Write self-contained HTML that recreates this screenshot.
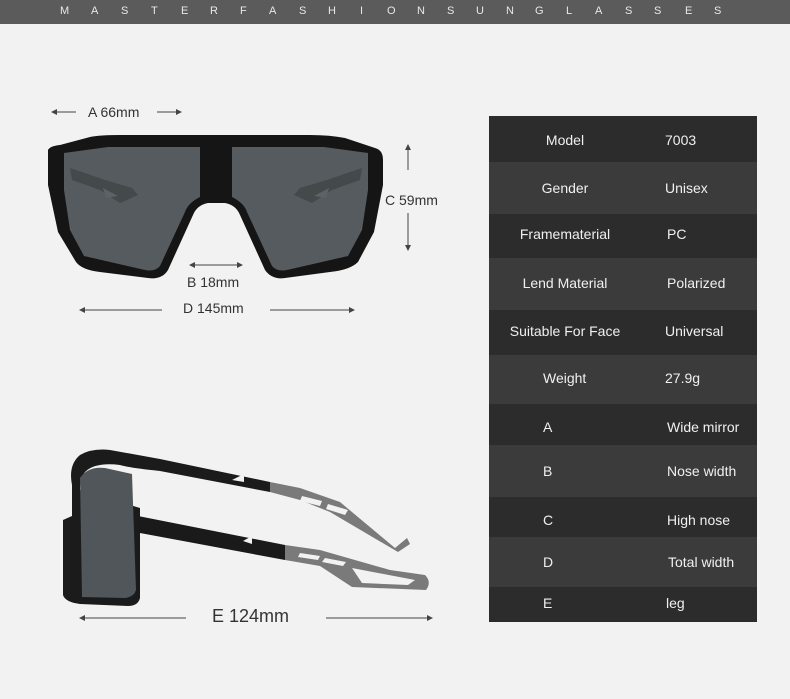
<!DOCTYPE html>
<html><head><meta charset="utf-8"><style>
body{margin:0;width:790px;height:699px;background:#f2f2f2;font-family:"Liberation Sans",sans-serif;position:relative;overflow:hidden}
.hdr{position:absolute;left:0;top:0;width:790px;height:24px;background:#5b5b5b}
.hdr span{position:absolute;top:5px;color:#e8e8e8;font-size:11px}
.tbl{position:absolute;left:489px;top:116px;width:268px;height:506px}
.r{position:absolute;left:0;width:268px;color:#f0f0f0;font-size:14px}
.r .a{position:absolute;left:0;width:152px;text-align:center}
.r .b{position:absolute;left:176px}
.lbl{position:absolute;color:#333;font-size:14px}
</style></head><body>
<div class="hdr">
<span style="left:60px">M</span><span style="left:91px">A</span><span style="left:121px">S</span><span style="left:151px">T</span><span style="left:181px">E</span><span style="left:210px">R</span><span style="left:240px">F</span><span style="left:269px">A</span><span style="left:299px">S</span><span style="left:328px">H</span><span style="left:360px">I</span><span style="left:387px">O</span><span style="left:417px">N</span><span style="left:447px">S</span><span style="left:476px">U</span><span style="left:506px">N</span><span style="left:535px">G</span><span style="left:566px">L</span><span style="left:595px">A</span><span style="left:625px">S</span><span style="left:654px">S</span><span style="left:685px">E</span><span style="left:714px">S</span>
</div>
<div class="tbl">
<div class="r" style="top:0;height:46px;background:#2c2c2c"><span class="a" style="top:16px">Model</span><span class="b" style="top:16px">7003</span></div>
<div class="r" style="top:46px;height:52px;background:#3b3b3b"><span class="a" style="top:18px">Gender</span><span class="b" style="top:18px">Unisex</span></div>
<div class="r" style="top:98px;height:44px;background:#2c2c2c"><span class="a" style="top:12px">Framematerial</span><span class="b" style="left:178px;top:12px">PC</span></div>
<div class="r" style="top:142px;height:52px;background:#3b3b3b"><span class="a" style="top:17px">Lend Material</span><span class="b" style="left:178px;top:17px">Polarized</span></div>
<div class="r" style="top:194px;height:45px;background:#2c2c2c"><span class="a" style="top:13px">Suitable For Face</span><span class="b" style="top:13px">Universal</span></div>
<div class="r" style="top:239px;height:49px;background:#3b3b3b"><span class="a" style="left:54px;width:auto;top:15px">Weight</span><span class="b" style="top:15px">27.9g</span></div>
<div class="r" style="top:288px;height:41px;background:#2c2c2c"><span class="a" style="left:54px;width:auto;top:15px">A</span><span class="b" style="left:178px;top:15px">Wide mirror</span></div>
<div class="r" style="top:329px;height:52px;background:#3b3b3b"><span class="a" style="left:54px;width:auto;top:18px">B</span><span class="b" style="left:178px;top:18px">Nose width</span></div>
<div class="r" style="top:381px;height:40px;background:#2c2c2c"><span class="a" style="left:54px;width:auto;top:15px">C</span><span class="b" style="left:178px;top:15px">High nose</span></div>
<div class="r" style="top:421px;height:50px;background:#3b3b3b"><span class="a" style="left:54px;width:auto;top:17px">D</span><span class="b" style="left:179px;top:17px">Total width</span></div>
<div class="r" style="top:471px;height:35px;background:#2c2c2c"><span class="a" style="left:54px;width:auto;top:8px">E</span><span class="b" style="left:177px;top:8px">leg</span></div>
</div>
<svg width="790" height="699" style="position:absolute;left:0;top:0">
<defs><marker id="ah" markerWidth="6" markerHeight="6" refX="5" refY="3" orient="auto"><path d="M0,0 L6,3 L0,6 z" fill="#444"/></marker></defs>
<g stroke="#444" stroke-width="1" marker-end="url(#ah)">
<line x1="76" y1="112" x2="52" y2="112"/><line x1="157" y1="112" x2="181" y2="112"/>
<line x1="408" y1="170" x2="408" y2="145"/><line x1="408" y1="213" x2="408" y2="250"/>
<line x1="215" y1="265" x2="190" y2="265"/><line x1="215" y1="265" x2="242" y2="265"/>
<line x1="162" y1="310" x2="80" y2="310"/><line x1="270" y1="310" x2="354" y2="310"/>
<line x1="186" y1="618" x2="80" y2="618"/><line x1="326" y1="618" x2="432" y2="618"/>
</g>
<path d="M48,150 Q50,146 60,145 L90,137 Q100,135 120,135 L310,135 Q330,135 345,138 L375,148 Q383,150 383,160 L383,185 L374,232 L358,262 Q350,270 330,272 L285,278 Q272,280 265,270 L240,215 Q236,205 225,203 L208,203 Q197,205 193,215 L168,270 Q162,280 148,278 L100,272 Q82,270 76,262 L58,232 L48,185 Z" fill="#151515"/>
<path d="M64,153 L108,147 L200,147 L200,197 Q188,203 185,212 L160,266 Q155,272 145,270 L84,256 L70,230 L64,190 Z" fill="#555b5e"/>
<path d="M368,153 L324,147 L232,147 L232,197 Q244,203 247,212 L272,266 Q277,272 287,270 L348,256 L362,230 L368,190 Z" fill="#555b5e"/>
<g fill="#44494b"><path d="M70,168 L105,180 L132,188 L138,195 L120,203 L100,190 L72,180 Z"/><path d="M362,168 L327,180 L300,188 L294,195 L312,203 L332,190 L360,180 Z"/></g>
<g fill="#5c6366"><path d="M103,188 L118,196 L106,198 Z"/><path d="M329,188 L314,196 L326,198 Z"/></g>
<path d="M63,520 L72,516 L72,485 Q68,465 80,455 Q92,448 110,450 L160,459 L270,482 L270,492 L160,471 Q130,468 120,465 Q95,462 85,472 Q80,478 80,490 L140,508 L140,598 Q138,606 128,606 L80,604 Q65,602 63,595 Z" fill="#1b1b1b"/>
<path d="M80,478 Q88,466 105,468 L132,474 L136,590 Q134,597 125,598 L82,597 Z" fill="#50565a"/>
<path d="M270,482 L300,488 L340,502 L395,548 L407,538 L410,544 L398,552 L330,512 L300,500 L270,492 Z" fill="#7a7a7a"/>
<path d="M138,516 L285,545 L285,560 L140,533 Z" fill="#1a1a1a"/>
<path d="M285,545 L320,550 L390,570 L425,575 Q432,582 426,590 L352,587 L320,566 L285,560 Z" fill="#7a7a7a"/>
<g fill="#f2f2f2"><polygon points="232,480 244,474 244,482"/><polygon points="243,541 252,536 252,544"/><polygon points="302,496 322,501 320,506 300,501"/><polygon points="328,504 348,510 345,515 326,509"/><polygon points="300,553 320,556 318,560 298,557"/><polygon points="325,558 346,562 343,566 322,562"/><polygon points="352,568 415,580 408,585 362,583"/></g>
</svg>
<div class="lbl" style="left:88px;top:104px">A 66mm</div>
<div class="lbl" style="left:385px;top:192px">C 59mm</div>
<div class="lbl" style="left:187px;top:274px">B 18mm</div>
<div class="lbl" style="left:183px;top:300px">D 145mm</div>
<div class="lbl" style="left:212px;top:606px;font-size:18px">E 124mm</div>
</body></html>
